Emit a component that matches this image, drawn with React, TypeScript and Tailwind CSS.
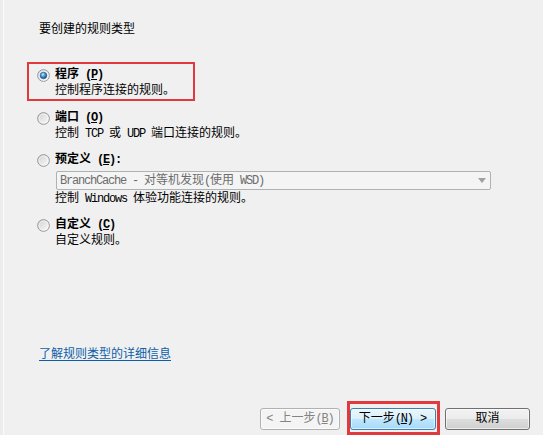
import { ReactNode } from 'react';

const FONT = { fontFamily: '"Liberation Mono", "Noto Sans CJK SC", monospace' };

// latin runs in the dialog font are narrower than Liberation Mono
const L = ({ children }: { children: ReactNode }) => (
  <span className="tracking-[-1.2px]">{children}</span>
);

const Radio = ({ checked }: { checked?: boolean }) => (
  <svg width="13" height="13" viewBox="0 0 13 13" className="shrink-0">
    <defs>
      <linearGradient id="radioFill" x1="0" y1="0" x2="1" y2="1">
        <stop offset="0" stopColor="#cfd0d2" />
        <stop offset="1" stopColor="#fbfbfb" />
      </linearGradient>
      <radialGradient id="radioDot" cx="0.4" cy="0.35" r="0.75">
        <stop offset="0" stopColor="#c8ecfc" />
        <stop offset="0.45" stopColor="#3c93d6" />
        <stop offset="1" stopColor="#163f6e" />
      </radialGradient>
    </defs>
    <circle cx="6.5" cy="6.5" r="5.9" fill="url(#radioFill)" stroke="#989a9c" strokeWidth="1" />
    <circle cx="6.5" cy="6.5" r="4.4" fill="none" stroke="#ffffff" strokeOpacity="0.6" strokeWidth="0.8" />
    {checked && <circle cx="6.5" cy="6.5" r="3.3" fill="url(#radioDot)" stroke="#24527f" strokeWidth="0.6" />}
  </svg>
);

type OptionProps = {
  checked?: boolean;
  label: ReactNode;
  desc: ReactNode;
  children?: ReactNode;
  className?: string;
};

const Option = ({ checked, label, desc, children, className = '' }: OptionProps) => (
  <div
    className={`flex border-2 pt-[3px] pl-[8px] ${
      checked ? 'border-[#e0393e]' : 'border-transparent'
    } ${className}`}
  >
    <div className="h-4 flex items-center">
      <Radio checked={checked} />
    </div>
    <div className="ml-[5px]">
      <div className="h-4 leading-4 font-bold">{label}</div>
      {children}
      <div className="h-4 leading-4">{desc}</div>
    </div>
  </div>
);

const Button = ({
  children,
  variant = 'normal',
  className = ''
}: {
  children: ReactNode;
  variant?: 'normal' | 'default' | 'disabled';
  className?: string;
}) => {
  const styles = {
    normal:
      'border-[#707070] bg-[linear-gradient(#f2f2f2_0%,#ebebeb_50%,#dddddd_51%,#cfcfcf_100%)] text-black',
    default:
      'border-[#3c7fb1] bg-[linear-gradient(#eaf6fd_0%,#d9f0fc_50%,#bee6fd_51%,#a7d9f5_100%)] text-black',
    disabled: 'border-[#adb2b5] bg-[#f4f4f4] text-[#838383]'
  };
  return (
    <div
      className={`h-[22px] rounded-[3px] border flex items-center justify-center text-[12px] shadow-[inset_0_0_0_1px_rgba(255,255,255,0.6)] ${styles[variant]} ${className}`}
    >
      {children}
    </div>
  );
};

export default function App() {
  return (
    <div className="flex h-[435px] w-[543px] bg-[#f0f0f0] text-[12px] text-black" style={FONT}>
      <div className="w-[3px] bg-[#ececec]" />
      <div className="w-px bg-[#fbfbfb]" />
      <div className="flex flex-1 flex-col">
        <div className="pt-[22px] pl-[35px] h-[38px] leading-4">要创建的规则类型</div>

        <div className="ml-[23px] mt-[24px] flex flex-col">
          <Option
            checked
            className="w-[168px]"
            label={
              <>
                程序<L> (<u>P</u>)</L>
              </>
            }
            desc="控制程序连接的规则。"
          />
          <Option
            className="mt-[4px]"
            label={
              <>
                端口<L> (<u>O</u>)</L>
              </>
            }
            desc={
              <>
                控制<L> TCP </L>或<L> UDP </L>端口连接的规则。
              </>
            }
          />
          <Option
            className="mt-[3px]"
            label={
              <>
                预定义<L> (<u>E</u>):</L>
              </>
            }
            desc={
              <>
                控制<L> Windows </L>体验功能连接的规则。
              </>
            }
          >
            <div className="ml-px mt-[3px] mb-px flex h-[19px] w-[435px] items-center justify-between rounded-[2px] border border-[#adb2b5] bg-[#f4f4f4] pl-[3px] pr-[4px] text-[#6d6d6d]">
              <span className="leading-4">
                <L>BranchCache - </L>对等机发现<L>(</L>使用<L> WSD)</L>
              </span>
              <svg width="8" height="5" viewBox="0 0 8 5">
                <path d="M0 0h8L4 5z" fill="#a0a0a0" />
              </svg>
            </div>
          </Option>
          <Option
            className="mt-[3px]"
            label={
              <>
                自定义<L> (<u>C</u>)</L>
              </>
            }
            desc="自定义规则。"
          />
        </div>

        <div className="mt-[96px] pl-[35px] h-4 leading-4">
          <span className="text-[#0c5ea8] underline underline-offset-2">了解规则类型的详细信息</span>
        </div>

        <div className="flex-1" />

        <div className="flex h-[34px] items-start justify-end pr-[13px]">
          <Button variant="disabled" className="mt-[7px] w-[80px]">
            <L>&lt;</L>&nbsp;上一步<L> (<u>B</u>)</L>
          </Button>
          <div className="ml-[7px] h-[34px] w-[93px] border-[3px] border-[#e0393e] pt-[4px]">
            <Button variant="default" className="w-[86px]">
              下一步<L> (<u>N</u>)</L>&nbsp;&gt;
            </Button>
          </div>
          <Button className="ml-[5px] mt-[7px] w-[85px]">取消</Button>
        </div>
      </div>
    </div>
  );
}
